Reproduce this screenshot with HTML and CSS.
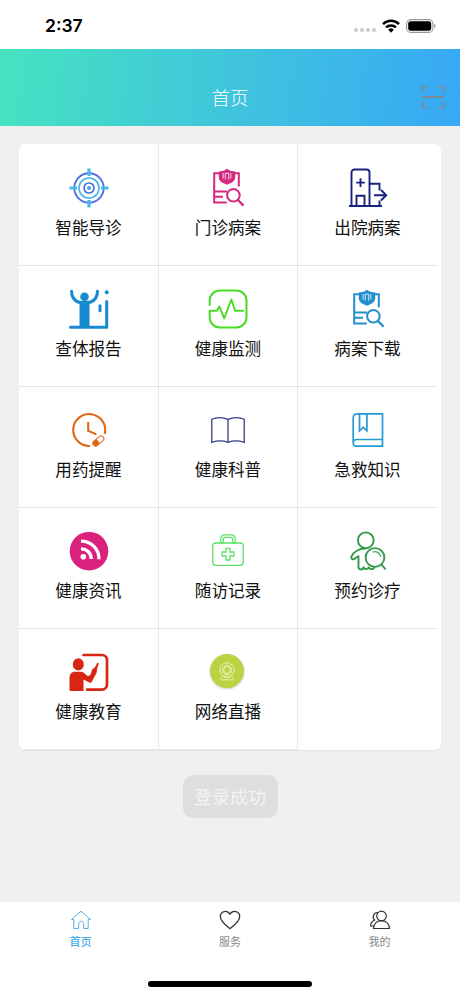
FILE: index.html
```html
<!DOCTYPE html>
<html lang="zh-CN">
<head>
<meta charset="utf-8">
<title>首页</title>
<link rel="stylesheet" href="styles.css">
</head>
<body>
<svg class="defs" aria-hidden="true">
  <symbol id="record" viewBox="0 0 40 40">
    <g fill="none" stroke="currentColor" stroke-width="2">
      <path d="M11.500 5.200H6.200v29.200h12.500M27 5.200h3.800v13.300M6.200 23.400h13M7 28.800h8"/>
      <circle cx="25.400" cy="27.300" r="6.300"/>
      <path d="M30 32l5.500 5.600" stroke-width="2.300"/>
    </g>
    <path d="M19 .8l3.200 1.900 5 .7v6.200c0 3.200-3.400 5.500-8.200 7.200-4.800-1.700-8.200-4-8.200-7.200V3.400l5-.7z" fill="currentColor"/>
    <path d="M15.200 5v5.500M17.300 11.500V5.200h3.400v6.300M22.800 5v5.500" fill="none" stroke="#fff" stroke-width=".8"/>
  </symbol>
</svg>
<header class="status">
  <span class="time">2:37</span>
  <span class="signals">
    <span class="dots"><i></i><i></i><i></i><i></i></span>
    <svg class="wifi" viewBox="0 0 18 14"><g fill="none" stroke="#000" stroke-width="2.500"><path d="M1 5.100a11.500 11.500 0 0 1 16 0"/><path d="M4 8.400a7.200 7.200 0 0 1 10 0"/></g><path d="M6.200 10.700a4 4 0 0 1 5.600 0L9 13.700z"/></svg>
    <svg class="battery" viewBox="0 0 30 14"><rect x=".6" y=".6" width="26.300" height="12.800" rx="4" fill="none" stroke="#999" stroke-width="1.100"/><rect x="2.200" y="2.200" width="23" height="9.600" rx="2.400"/><path d="M28.200 4.800c1.700.6 1.700 3.800 0 4.400z" fill="#999"/></svg>
  </span>
</header>
<div class="titlebar">
  <h1>首页</h1>
  <svg class="scan" viewBox="0 0 24 24" fill="none" stroke="#7c8b98" stroke-width="1.700"><path d="M1.500 7.500v-6h6M16.500 1.500h6v6M22.500 16.500v6h-6M7.500 22.500h-6v-6"/><path d="M1 12h22" stroke-width="2"/></svg>
</div>
<main>
  <section class="card">
    <a class="cell"><svg viewBox="0 0 40 40" fill="none"><circle cx="20" cy="20" r="14.700" stroke="#4d70e4" stroke-width="1.900"/><circle cx="20" cy="20" r="10" stroke="#48b4ea" stroke-width="1.600"/><circle cx="20" cy="20" r="5" stroke="#4472d8" stroke-width="1.700"/><circle cx="20" cy="20" r="2" fill="#44a9e8"/><path d="M20 .5v7.500M20 32v7.500M.5 20H8M32 20h7.500" stroke="#4ab9ec" stroke-width="3.200"/></svg><span>智能导诊</span></a>
    <a class="cell"><svg class="pink"><use href="#record"/></svg><span>门诊病案</span></a>
    <a class="cell"><svg viewBox="0 0 40 40" fill="none" stroke="#17227f" stroke-width="1.900"><path d="M3.500 38V4.500a3 3 0 0 1 3-3h12a3 3 0 0 1 3 3V38M21.500 15.800h10v6.700M31.500 32.500V38M1 38h33M8.500 38V27.800h8V38M12.500 10.300v8.600M8.200 14.600h8.600"/><path d="M26 27.200h12M33 22l5.200 5.200-5.200 5.300"/></svg><span>出院病案</span></a>

    <a class="cell"><svg viewBox="0 0 40 40" fill="none" stroke="#168bcf"><circle cx="15.500" cy="7.800" r="4.300" fill="#168bcf" stroke="none"/><path d="M2.500 2.200c0 5.300 3 10.400 8.500 11.200h9c5.500-.8 8.500-5.900 8.500-11.200" stroke-width="3.100" stroke-linecap="round"/><path d="M10.500 12h10v26h-10z" fill="#168bcf" stroke="none"/><path d="M1.500 38.200h36.200V12.500" stroke-width="3" stroke-linecap="round" stroke-linejoin="round"/><path d="M31 16.700v5" stroke-width="3" stroke-linecap="round"/><circle cx="37.700" cy="3.200" r="2" fill="#168bcf" stroke="none"/></svg><span>查体报告</span></a>
    <a class="cell"><svg viewBox="0 0 40 40" fill="none" stroke="#49db25" stroke-width="2" stroke-linecap="round" stroke-linejoin="round"><path d="M1.700 16v-4.500a10 10 0 0 1 10-10h16.800a10 10 0 0 1 10 10v17a10 10 0 0 1-10 10H11.700a10 10 0 0 1-10-10v-6.700h7l2.700-4.300 4.800 12 7.200-19 3.700 11.300h8"/></svg><span>健康监测</span></a>
    <a class="cell"><svg class="blue"><use href="#record"/></svg><span>病案下载</span></a>

    <a class="cell"><svg viewBox="0 0 40 40" fill="none" stroke="#df6815" stroke-width="2.100"><path d="M21 36A16 16 0 1 1 35.700 24M19.200 12v8.700l8.200 3.700"/><g transform="rotate(-40 29 31)"><rect x="23" y="28.400" width="12.600" height="5.600" rx="2.800" fill="#fff" stroke-width="1"/><path d="M29 28.400h-3.200a2.800 2.800 0 0 0 0 5.600H29z" fill="#df6815" stroke="none"/></g></svg><span>用药提醒</span></a>
    <a class="cell"><svg viewBox="0 0 40 40" fill="none" stroke="#363d8c" stroke-width="1.300"><path d="M20 9.300C15 7 8 7 3.800 9.300v23c4.500-1.500 11.500-1.800 16.200 0 4.700-1.800 11.700-1.500 16.200 0v-23C32 7 25 7 20 9.300zv23"/></svg><span>健康科普</span></a>
    <a class="cell"><svg viewBox="0 0 40 40" fill="none" stroke="#2499d2" stroke-width="1.700"><path d="M34.500 3.800H9.200a4 4 0 0 0-4 4v25.400a3 3 0 0 0 3 3h26.300zM34.500 29.500H8.500a3.300 3.300 0 0 0-3.300 3.300M11.500 4v16.800l3.700-3.500 3.700 3.500V4"/></svg><span>急救知识</span></a>

    <a class="cell"><svg viewBox="0 0 40 40" fill="none"><circle cx="20" cy="20.200" r="19.300" fill="#d8227d"/><circle cx="14.300" cy="25.800" r="2.800" fill="#fff"/><path d="M12 17.800c6 0 10.200 4.500 10.200 10.300M12 10.200c10.500 0 18 7.800 18 18" stroke="#fff" stroke-width="3.300"/></svg><span>健康资讯</span></a>
    <a class="cell"><svg viewBox="0 0 40 40" fill="none" stroke="#5de16a" stroke-width="1.300"><rect x="4.800" y="12" width="30.400" height="22.300" rx="3"/><path d="M12.800 11.800V8c0-2.500 1.500-4.200 4-4.200h6.400c2.500 0 4 1.700 4 4.200v3.800h-2.400V8.500c0-1.500-.8-2.200-2-2.200h-5.600c-1.200 0-2 .7-2 2.200v3.300zM18 17.300h4V21h4v4h-4v4h-4v-4h-4v-4h4z"/></svg><span>随访记录</span></a>
    <a class="cell"><svg viewBox="0 0 40 40" fill="none" stroke="#329a49" stroke-width="1.900" stroke-linecap="round" stroke-linejoin="round"><circle cx="17.800" cy="9.300" r="7.900"/><path d="M17 17.500c-6 0-11.500 3.500-13.500 7.800-1 2.700 2 4 3.700 2l3.300-2v10.800c0 3 4.500 3.400 5.200.2.600 2.400 4.300 2.500 5 0 .8 2 3.700 2.500 5.500.5"/><circle cx="27" cy="26.500" r="9.400"/><path d="M33.500 33.500l3.700 4.300"/><path d="M25 21c4-1 7 1 7.500 4.500" stroke-width="1.100"/></svg><span>预约诊疗</span></a>

    <a class="cell"><svg viewBox="0 0 40 40" fill="none"><path d="M14.500 3H33a5 5 0 0 1 5 5v24.600a5 5 0 0 1-5 5H18" stroke="#d72714" stroke-width="2.700" stroke-linecap="round"/><ellipse cx="9.300" cy="12.400" rx="5.500" ry="6.200" fill="#d72714"/><path d="M.5 37.500V26.500c0-4.500 2-6.800 5.500-6.800h6.500c2 0 4.500 3 6.500 4.500l2.500-1.500 1.500-5 3.300-3 1.600-3.300c.7-1.300 2.200-.5 1.700.8l-1.400 4-.6 4.500-4.600 8.800c-.6 1.200-1.700 1.400-2.700.9l-5.800-2.800V39H2a1.500 1.500 0 0 1-1.500-1.500z" fill="#d72714"/></svg><span>健康教育</span></a>
    <a class="cell"><svg class="webcam" viewBox="0 0 40 40" fill="none" stroke="#f0f4c5" stroke-width=".9"><circle cx="19" cy="19" r="17" fill="#b9d342" stroke="none"/><circle cx="19" cy="18" r="7.200"/><circle cx="19" cy="18" r="4.700"/><circle cx="19" cy="18" r="3.300"/><path d="M14.500 23.800c-4 3.400-1.500 4 0 4h9c1.500 0 4-.6 0-4-3 2-6 2-9 0z"/></svg><span>网络直播</span></a>
  </section>
  <div class="toast">登录成功</div>
</main>
<nav class="tabs">
  <a class="tab active"><svg viewBox="0 0 22 20" fill="none" stroke="#58b0e2" stroke-width="1"><path d="M3.800 9.500H1.500L11 1.200l9.500 8.300h-2.300v9h-4.500v-5c0-3-5-3-5 0v5H3.800z" stroke-linejoin="round"/></svg><span>首页</span></a>
  <a class="tab"><svg viewBox="0 0 22 20" fill="none" stroke="#333" stroke-width="1.300"><path d="M11 18.700C7 15.500 1.300 11.500 1.300 6.500c0-5.500 7-7 9.700-2.200 2.700-4.800 9.700-3.300 9.700 2.200 0 5-5.700 9-9.700 12.200z" stroke-linejoin="round"/></svg><span>服务</span></a>
  <a class="tab"><svg viewBox="0 0 22 20" fill="none" stroke="#333" stroke-width="1.200"><circle cx="12.500" cy="6" r="4.800"/><path d="M4.500 18.500c0-10.500 16-10.500 16 0zM8.800 2.800C5 2 2.500 7.200 5.600 10c-2.900 1.300-4 3.700-4 6h3.200"/></svg><span>我的</span></a>
</nav>
<footer class="home"><i></i></footer>
</body>
</html>
```
FILE: styles.css
```css
* { box-sizing: border-box; }
body {
  margin: 0;
  width: 460px;
  height: 996px;
  display: flex;
  flex-direction: column;
  background: #fff;
  color: #111;
  font-family: "Noto Sans CJK SC", sans-serif;
  overflow: hidden;
}
.defs { position: absolute; width: 0; height: 0; }
.status {
  height: 49px;
  flex: none;
  display: flex;
  justify-content: space-between;
  align-items: center;
  padding: 2px 24px 0 45px;
}
.time { font: 600 17.5px/22px Inter, sans-serif; color: #000; }
.signals { display: flex; align-items: center; }
.dots { display: flex; gap: 1.7px; margin: 9px 6.5px 0 0; }
.dots i { width: 4px; height: 4px; border-radius: 50%; background: #ccc; }
.wifi { width: 18px; height: 14px; margin-right: 6px; }
.battery { width: 30px; height: 14px; }
.titlebar {
  height: 77px;
  flex: none;
  display: grid;
  grid-template-columns: 1fr auto 1fr;
  align-items: center;
  padding: 19px 15px 0;
  background: linear-gradient(98deg, #46e3c0 0%, #40c7da 46%, #37a8f6 100%);
}
h1 {
  grid-column: 2;
  margin: 0;
  color: #fff;
  font-size: 18.5px;
  font-weight: 300;
  line-height: 26px;
}
.scan { justify-self: end; width: 24px; height: 24px; }
main {
  flex: none;
  height: 776px;
  padding: 18px 19px 0;
  background: #f0f0f0;
  display: flex;
  flex-direction: column;
}
.card {
  width: 422px;
  height: 606px;
  display: grid;
  grid-template-columns: repeat(3, 139.5px);
  grid-template-rows: 122px repeat(4, 121px);
  background: #fff;
  border-radius: 6px;
  box-shadow: 0 1px 1px #e5e5e5;
  overflow: hidden;
}
.cell {
  border-right: 1px solid #e9e9e9;
  border-bottom: 1px solid #e5e5e5;
  display: flex;
  flex-direction: column;
  align-items: center;
  justify-content: flex-end;
  padding: 0 0 25px .5px;
}
.cell:nth-child(3n) { border-right-color: transparent; }
.cell svg { width: 40px; height: 40px; flex: none; }
.cell span { margin-top: 7px; font-size: 16.6px; line-height: 25px; white-space: nowrap; }
.pink { color: #d32980; }
.blue { color: #208fcb; }
.webcam { filter: drop-shadow(0 1px 1px #ccc); }
.toast {
  align-self: center;
  margin-top: 25px;
  width: 95px;
  height: 43px;
  border-radius: 10px;
  background: #dedede;
  color: #f3f3f3;
  font-size: 18px;
  line-height: 43px;
  text-align: center;
}
.tabs {
  height: 60px;
  flex: none;
  display: grid;
  grid-template-columns: repeat(3, 149.5px);
  justify-content: center;
  padding-top: 8px;
}
.tab {
  display: flex;
  flex-direction: column;
  align-items: center;
  color: #888;
  font-size: 11px;
  line-height: 15px;
}
.tab svg { width: 22px; height: 20px; margin-bottom: 4px; }
.active { color: #48aee5; font-weight: 500; }
.home { flex: 1; display: flex; justify-content: center; align-items: flex-start; padding-top: 19px; }
.home i { width: 164px; height: 6px; border-radius: 3px; background: #000; }
```
